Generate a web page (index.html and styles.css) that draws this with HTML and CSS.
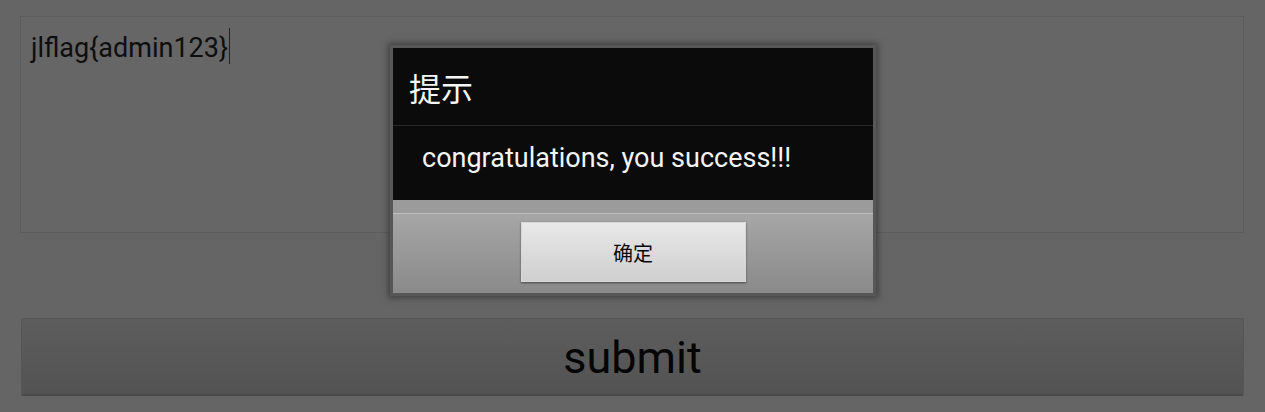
FILE: index.html
```html
<!DOCTYPE html>
<html lang="zh">
<head>
<meta charset="utf-8">
<title>提示</title>
<link rel="stylesheet" href="styles.css">
</head>
<body>
<main class="page">
  <div class="field"><span class="value">jlflag{admin123}</span><span class="caret"></span></div>
  <div class="submit">submit</div>
</main>
<div class="dialog">
  <div class="dialog-body">
    <div class="dialog-title">提示</div>
    <div class="dialog-msg">congratulations, you success!!!</div>
  </div>
  <div class="dialog-strip"></div>
  <div class="dialog-actions">
    <div class="ok">确定</div>
  </div>
</div>
</body>
</html>
```

FILE: styles.css
```css
html, body {
  margin: 0;
  padding: 0;
  background: #656565;
  height: 412px;
  overflow: hidden;
}
.page {
  display: flex;
  flex-direction: column;
  padding: 16px 21px 0 20px;
  font-family: Roboto, "Noto Sans CJK SC", sans-serif;
}
.field {
  box-sizing: border-box;
  height: 217px;
  border: 1px solid #5c5c5c;
  background: #666666;
  padding: 14px 10px 0 10px;
  display: flex;
  align-items: flex-start;
  color: #0e0e0e;
  font-size: 27px;
  line-height: 34px;
}
.caret {
  width: 1px;
  height: 36px;
  background: #222;
  margin-left: 1px;
  margin-top: -3px;
}
.submit {
  margin-top: 85px;
  margin-left: 1px;
  height: 78px;
  box-sizing: border-box;
  border: 1px solid #565656;
  border-bottom: 2px solid #4a4a4a;
  border-radius: 2px;
  background: linear-gradient(#5d5d5d, #535353);
  display: flex;
  align-items: center;
  justify-content: center;
  font-size: 45px;
  color: #050505;
  padding-top: 2px;
}
.dialog {
  position: absolute;
  left: 390px;
  top: 45px;
  width: 486px;
  box-sizing: border-box;
  border: 3px solid #575757;
  background: #575757;
  box-shadow: 0 0 6px 2px rgba(40,40,40,0.6);
  font-family: Roboto, "Noto Sans CJK SC", sans-serif;
}
.dialog-body {
  background: #0b0b0b;
  color: #f5f5f5;
}
.dialog-title {
  height: 78px;
  box-sizing: border-box;
  border-bottom: 1px solid #262626;
  padding-left: 16px;
  display: flex;
  align-items: center;
  font-family: "Noto Sans CJK SC", sans-serif;
  font-size: 32px;
}
.dialog-msg {
  height: 74px;
  padding: 17px 0 0 29px;
  box-sizing: border-box;
  font-size: 27px;
  line-height: 30px;
}
.dialog-strip {
  height: 13px;
  background: #9b9b9b;
  border-bottom: 1px solid #bdbdbd;
}
.dialog-actions {
  height: 79px;
  background: linear-gradient(#a6a6a6, #8a8a8a);
  display: flex;
  justify-content: center;
  padding-top: 8px;
  box-sizing: border-box;
}
.ok {
  width: 225px;
  height: 60px;
  box-sizing: border-box;
  background: linear-gradient(#e8e8e8, #cfcfcf);
  border: 1px solid #d8d8d8;
  box-shadow: 0 1px 2px rgba(0,0,0,0.5);
  display: flex;
  align-items: center;
  justify-content: center;
  font-family: "Noto Sans CJK SC", sans-serif;
  font-size: 20px;
  color: #0a0a0a;
}
```
